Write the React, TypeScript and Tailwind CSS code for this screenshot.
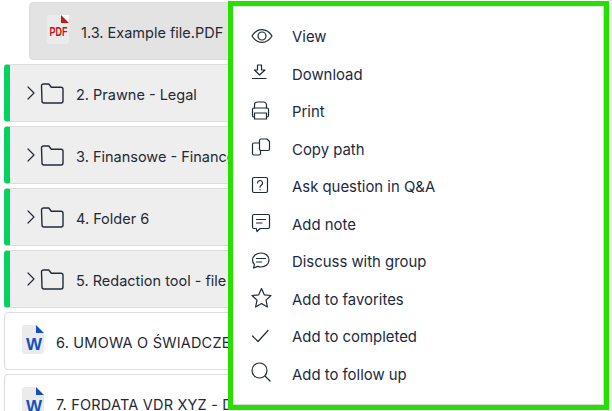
import type { ReactNode } from 'react';
import { ChevronRight } from 'lucide-react';

function Svg({ children }: { children: ReactNode }) {
  return (
    <svg width="22" height="22" viewBox="0 0 22 22" fill="none" stroke="#1e2a3a" strokeWidth="1.2" strokeLinecap="round" strokeLinejoin="round" className="shrink-0">
      {children}
    </svg>
  );
}

const menu: { label: string; icon: ReactNode }[] = [
  { label: 'View', icon: <Svg><path d="M1 11c2.600-4.200 6-6.400 10-6.400S18.400 6.800 21 11c-2.600 4.200-6 6.400-10 6.400S3.600 15.200 1 11z" /><circle cx="11" cy="11" r="4" /></Svg> },
  { label: 'Download', icon: <Svg><path d="M6.500 3h4v5h3.500L8.500 13 3.500 8h3z" /><path d="M1.500 16.500h13.500" /></Svg> },
  { label: 'Print', icon: <Svg><path d="M3.500 8V5A3 3 0 0 1 6.500 2h6a3 3 0 0 1 3 3v3" /><path d="M3.500 17H2.500A1.500 1.500 0 0 1 1.500 15.500V9.500A1.500 1.500 0 0 1 3 8h13a1.500 1.500 0 0 1 1.500 1.500v6A1.500 1.500 0 0 1 16 17h-.5" /><path d="M3.500 13h12v6h-12z" /></Svg> },
  { label: 'Copy path', icon: <Svg><path d="M10 2h6l2.500 2.500V12a1.500 1.500 0 0 1-1.500 1.500h-7A1.500 1.500 0 0 1 8.500 12V3.500A1.500 1.500 0 0 1 10 2z" /><path d="M8.500 6H3A1.500 1.500 0 0 0 1.500 7.500v9A1.500 1.500 0 0 0 3 18h5a1.500 1.500 0 0 0 1.500-1.500v-3" /></Svg> },
  { label: 'Ask question in Q&A', icon: <Svg><rect x="1.500" y="2.500" width="15" height="15" rx="1.500" /><path d="M6.500 8a2.500 2.500 0 1 1 3.700 2.200c-.9.500-1.200 1-1.200 2" /><path d="M9 14.700v.1" /></Svg> },
  { label: 'Add note', icon: <Svg><path d="M3 2.500h14A1.500 1.500 0 0 1 18.500 4v11a1.500 1.500 0 0 1-1.500 1.500H9L6 19.500l-.6-3H3A1.500 1.500 0 0 1 1.500 15V4A1.500 1.500 0 0 1 3 2.500z" /><path d="M5.500 7.500h9M5.500 11h5.500" /></Svg> },
  { label: 'Discuss with group', icon: <Svg><path d="M10 3c4.500 0 8 2.900 8 7s-3.500 7-8 7c-1.100 0-2.200-.2-3.200-.6L2.500 18l1-3.300C2.200 13.400 1.500 11.800 1.500 10c0-4.100 4-7 8.500-7z" /><path d="M5.500 8.500h9M5.500 12h5" /></Svg> },
  { label: 'Add to favorites', icon: <Svg><path d="M10.500 1.500l2.800 6.300 6.700.7-5 4.600 1.400 6.900-5.900-3.500-5.900 3.500 1.400-6.900-5-4.600 6.700-.7z" /></Svg> },
  { label: 'Add to completed', icon: <Svg><path d="M1.500 11l5.500 5.500L17 5.500" /></Svg> },
  { label: 'Add to follow up', icon: <Svg><circle cx="8.500" cy="8.500" r="7.500" /><path d="M14 14l5 5" /></Svg> },
];

const rows = ['2. Prawne - Legal', '3. Finansowe - Finance', '4. Folder 6', '5. Redaction tool - file'];

function DocIcon({ color, text }: { color: string; text: string }) {
  return (
    <span className="relative mb-[3px] flex h-[29px] w-[22px] shrink-0 items-end justify-center rounded-[3px] bg-[#ebebec]">
      <span className="absolute right-0 top-0 h-[8px] w-[8px] bg-white" />
      <span className="absolute right-0 top-0 h-[8px] w-[8px]" style={{ backgroundColor: color, clipPath: 'polygon(0 0, 0 100%, 100% 100%)' }} />
      {text === 'W' ? (
        <span className="pb-[1px] pl-[2px] font-['Liberation_Sans',sans-serif] text-[17px] font-bold leading-none" style={{ color }}>W</span>
      ) : (
        <span className="scale-x-[0.72] pb-[6px] font-['Liberation_Sans',sans-serif] text-[12.500px] font-bold leading-none" style={{ color }}>PDF</span>
      )}
    </span>
  );
}

function FolderIcon() {
  return (
    <svg width="24" height="21" viewBox="0 0 24 21" fill="none" stroke="#232b38" strokeWidth="1.4" strokeLinejoin="round" className="shrink-0">
      <path d="M1.500 3A2 2 0 0 1 3.500 1h5.300l2.500 3.200h9.700a2 2 0 0 1 2 2V18a2 2 0 0 1-2 2h-17a2 2 0 0 1-2-2z" />
    </svg>
  );
}

export default function App() {
  return (
    <div className="relative h-[411px] w-[612px] overflow-hidden bg-white font-['Inter',sans-serif] text-[14.500px] text-[#1f2937]">
      <div className="flex flex-col gap-1 pl-1 pt-[2px]">
        <div className="ml-[25px] flex h-[58px] items-center gap-[12px] rounded border border-[#dddddd] bg-[#e3e3e3] pl-[17px]">
          <DocIcon color="#c4161c" text="PDF" />
          <span className="pt-[3px]">1.3. Example file.PDF</span>
        </div>
        {rows.map(r => (
          <div key={r} className="flex h-[58px] items-center rounded border border-l-[6px] border-[#dddddd] border-l-[#00d35f] bg-[#eeeeee] pl-[10px]">
            <ChevronRight size={24} strokeWidth={1.2} color="#232b38" className="ml-[-1px] shrink-0" />
            <span className="ml-[-3px]"><FolderIcon /></span>
            <span className="ml-[12px] whitespace-nowrap pt-[3px]">{r}</span>
          </div>
        ))}
        <div className="flex h-[58px] items-center gap-[12px] rounded border border-[#dddddd] bg-white pl-[17px]">
          <DocIcon color="#1450c4" text="W" />
          <span className="whitespace-nowrap pt-[3px] tracking-[0.2px]">6. UMOWA O ŚWIADCZE</span>
        </div>
        <div className="flex h-[58px] items-center gap-[12px] rounded border border-[#dddddd] bg-white pl-[17px]">
          <DocIcon color="#1450c4" text="W" />
          <span className="whitespace-nowrap pt-[3px] tracking-[0.2px]">7. FORDATA VDR XYZ - D</span>
        </div>
      </div>

      <div className="absolute right-0 top-0 h-full w-[3px] bg-[#ececec]" />
      <div className="absolute left-[228px] top-[1px] flex h-[409px] w-[381px] flex-col border-[5px] border-[#27e000] bg-white pl-[18px] pt-[11px] text-[14.900px] text-[#1c2b3f] shadow-[inset_-1px_-1px_0_#d8d8d8,inset_0_1px_0_#e4e4e4]">
        {menu.map(m => (
          <div key={m.label} className="flex h-[37.500px] shrink-0 items-center gap-[19px]">
            {m.icon}
            <span className="pt-[3px]">{m.label}</span>
          </div>
        ))}
      </div>
    </div>
  );
}
